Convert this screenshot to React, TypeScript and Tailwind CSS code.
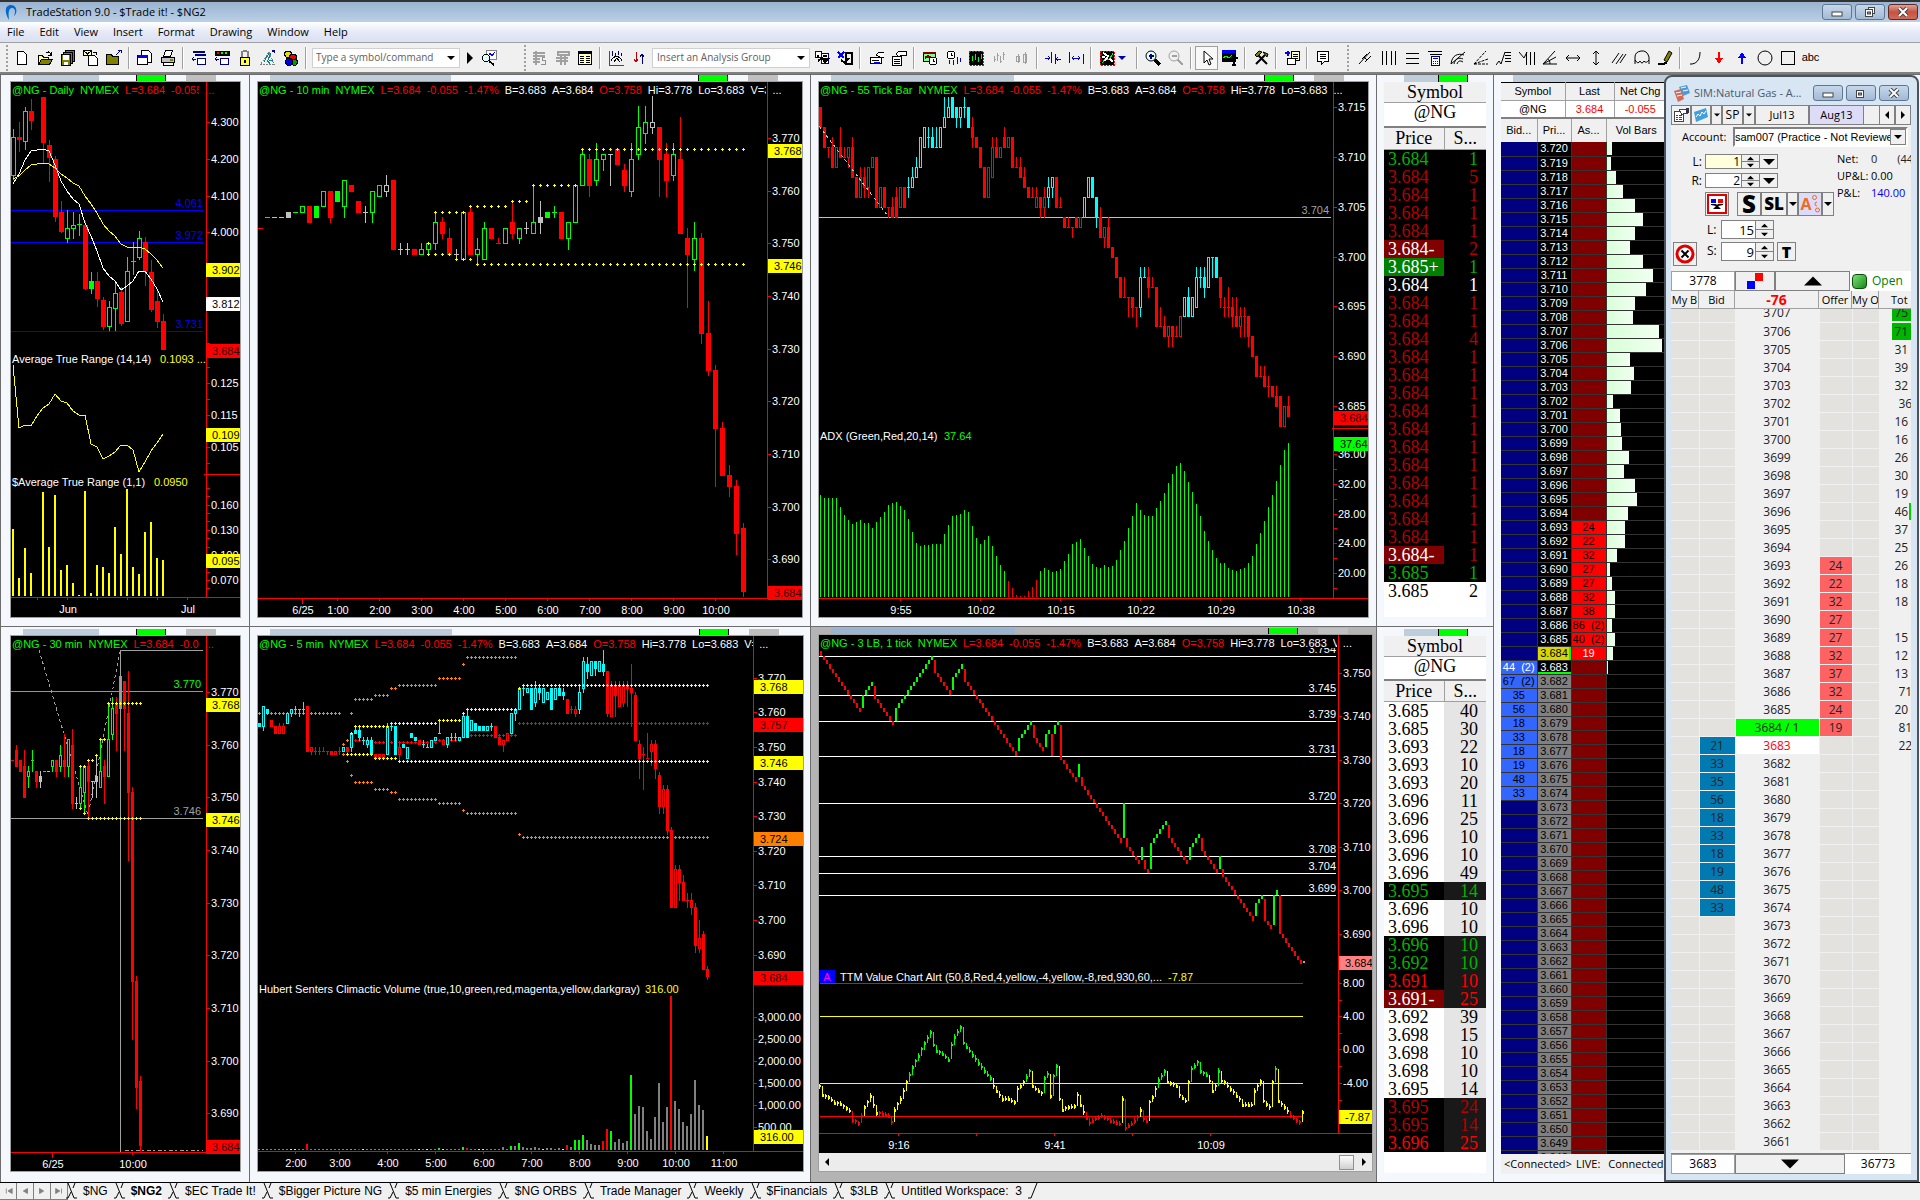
import React from "react";

type Piece = { text: string; color: string; clip?: string };

const GREEN = "#00ff00";
const RED = "#ff0000";
const YELLOW = "#ffff00";
const CYAN = "#00ffff";
const ORANGE = "#ff8000";

const kindColor: Record<string, string> = {
  g: GREEN,
  r: RED,
  c: CYAN,
  w: "#c0c0c0",
};

// One token per bar: colour letter (upper case = other fill), then
// price | top,bottom | high,price,low | high,top,bottom,low
const dailyBars = `g4280,4260,4155,4145 r4299,4260,4253,4222 g4340,4331,4247,4226 r4364,4331,4305,4282 -
r4369,4369,4246,4188 r4252,4236,4205,4138 r4207,4198,4043,4029 r4085,4054,4002,3999 g4060,4012,3984,3972
g4054,4020,4011,3984 g4049,4022,3993 r4030,4019,3848,3844 G3890,3868,3848,3833 r3890,3868,3820,3798
r3823,3814,3743,3736 g3811,3797,3743,3732 g3868,3835,3794,3732 r3851,3836,3752,3748 g3933,3894,3757,3757
g3974,3922,3885 g4004,3985,3932,3926 r3986,3974,3896,3855 r3925,3892,3790,3784 r3843,3811,3757,3742
r3778,3759,3681,3681`;

const tenMinBars = `g755 w755 w755 W756,755 g756 g757,756 r757,754 G757,755 g760,757 r760,760,755,754 G760,758
g762,762,757,755 r761,760 r758,756 w757,756,754 g760,760,756,754 g761,759 w763,761,760,759 r762,749
w750,749,748 w750,749,748 r749,748 g750,749,748,748 g750,750,749,748 g756,754,750,749 r755,754,752,751
r753,751,748,748 w749,748,747 g756,747 r757,756,748,748 g751,749,748,746 g754,753,747,747 r753,751
r751,750,750 g753,750 r758,754,752,751 g753,753,751,750 w754,753,752 g761,754,752,752 W758,755,754,752
G756,755 g757,756,755 r756,751 g754,754,751,749 g761,754 g768,767,761,761 r767,766,761,759
g769,766,762,761 g767,767,766,764 w767,767,761 r768,765 r765,764,761,760 g769,766,760,759
g776,772,767,766 g776,773,771,769 w778,773,772,771 r772,772,766,759 r769,767,762,759 g769,767,763,762
r774,766,752,752 r753,751,748,738 g754,751,747,745 r752,751,733,731 r739,733,726,725 r727,726,715,704
r716,715,706,706 r708,706,704,702 r705,704,695,691 r697,696,684,683`;

const thirtyMinBars = `r757 r760,759,756,756 r757,755 r759,756,750,750 g756,755,754,752 g759,757,755
r755,755,753,752 W755,754,753,752 g755 w755 g757,757,756,755 r757,757,755,754 g760,758,756,755
r762,757,756,754 g761,761,756,754 r763,760,749,748 w750,749,748 g756,752,749,748 g756,756,751,747
r757,756,753,746 w753,753,750 W758,754,753,750 g761,755,752,752 r757,756,754,749 g768,761,754,754
g769,767,762,761 r769,768,766,759 G773,767 r772,772,767,759 r774,766,751,738 r752,751,715,704
r716,715,695,691 r697,696,684,683`;

const fiveMinBars = `C757,756 c762,762,756,755 C761,760 r758,756 r756,754 R757,756,754,754 R757,756,754,754
c760,757 c761,761,760,759 c762,761,760 c761,761,759 c763,761,760 r762,749 R750,750,749,748 r750,749,748
r750,749,748 r750,749,749 r749,749,748 r749,748 R749,748 r750,749,748 c750,749 r750,750,749,748
c754,754,750,749 C756,755,754,754 C756,755,753,752 c753,752,751 c753,752,751,750 C753,752,748,748 r748,747
R748,747 R748,747 c757,756,748,748 c757,756,755 C756,748 R751,750,748,746 C751,750 c750,747 C754,753
C753,752 r752,751 c752,751,750 c751,750,750 c752,750 c753,752 c758,754,754 R752,751 c753,753,751,750
c754,753,752 c754,753,752 c753,752 c760,759,753,753 C761,759,753,753 c758,755 C757,755 C756,755 C756,755
c756,755 c757,756,755 r756,753 r753,751 R752,752,751,749 R754,752 c760,754 c761,761,760,758 c767,761
c768,767,765 c767,766 C767,761 c769,767,763,762 C768,767,766,764 c767,763 c766,764 C767,761
c767,764 C768,767,765,765 C767,766,765,764 r764,760 r762,761,760 R762,761,760,759 c768,766,761,760
c776,775,767,766 C776,774,772,770 c775,771 C775,775,773,771 c775,772 C778,774,772,771 r772,772,760,759
R769,768,759,759 r769,768,765,759 R769,768,762,762 R769,768,763,762 r769,768,767,762 r774,767,766,756
r766,765,752,752 r752,751,747,741 r750,748,738 r754,747,747 R752,751,749,745 r752,751,744,741
r743,742,733,731 R739,738,733,731 r739,738,726,725 r727,726,704,704 R716,715,704,704 r716,715,711,706
r713,711,706,706 r708,706,704 r708,706,704,702 r705,704,693,691 R700,695,692,691 r697,696,686,686
r687,686,684,683`;

const tickBars = `r715,713 r713,711 r711,711,710 r712,711,709,709 R711,709 r713,711,710,710 r711,710,710
R711,711,710,709 r712,711,708,708 r708,706 R709,708,706,706 r709,708,707,706 R709,709,707,706 R710,709
r710,705 R707,705 r707,705 r705,705,704 r706,705,704,704 r707,706,704,704 R707,705 r707,705 c708,707,706
c709,708,707,707 c710,709,708,708 c712,709 c713,711 c713,712,711 C713,712,711,711 c713,711,711 c713,711
c716,714,713,713 c716,715,714,714 C716,714 C715,715,714,713 c715,715,714,713 c716,715,714 C715,713
r714,713,712,711 r712,711 r711,709 r709,706 R709,706 R712,711,708,708 r712,711,710,710 R711,710
r713,712,711,711 R712,711 r712,709 r710,709,709 r710,709,708,708 r709,708,707,707 r707,706 r707,706,706
R707,706,705,705 r706,706,705,704 R707,706,705,704 c708,707,706,705 c708,708,707,706 r708,705 r706,705,705
r704,703 r704,703,703 r703,703,702 r704,703 R704,703 c706,704 c708,706 C708,706 C706,706,704,703
r705,704,702,702 R703,703,702,701 r704,703,701,701 r701,700 r700,698 r698,696 r698,696,696 r696,696,694
r696,696,695,694 r695,695,693 c699,698,695,694 c699,698,698 r699,698,697,696 r698,697,697 r697,693
r695,693,693 r694,693,692,692 R693,693,692,691 r693,693,692,691 r693,692,692 R694,692 c696,694
C697,696,694,694 c696,694 c699,698,695,695 c699,698,697 C699,698,697,696 c700,697 c700,700,698 C700,698
r698,698,696,695 r696,695,694 r697,695,694 r696,695,694,693 r696,694,693,693 R695,694,693,692
r695,694,692 r694,694,692,691 r692,690 r690,688 r689,688,688 r689,688,687,687 r688,687,686 r687,686
r687,686,685,685 r686,683 R685,683 r686,685,684,684`;

type Bar = { kind: string; high: number; top: number; bottom: number; low: number } | null;

function parseBars(src: string): Bar[] {
  return src
    .trim()
    .split(/\s+/)
    .map((t) => {
      if (t === "-") return null;
      const n = t.slice(1).split(",").map(Number);
      const kind = t[0];
      if (n.length === 1) return { kind, high: n[0], top: n[0], bottom: n[0], low: n[0] };
      if (n.length === 2) return { kind, high: n[0], top: n[0], bottom: n[1], low: n[1] };
      if (n.length === 3) return { kind, high: n[0], top: n[1], bottom: n[1], low: n[2] };
      return { kind, high: n[0], top: n[1], bottom: n[2], low: n[3] };
    });
}

type Scale = (p: number) => number;
const scale =
  (refPrice: number, refY: number, perTick: number): Scale =>
  (p) =>
    Math.round(refY + (refPrice - p) * perTick);

function Candles({ src, x0, step, width, y }: { src: string; x0: number; step: number; width: number; y: Scale }) {
  const half = (width - 1) / 2;
  return (
    <g>
      {parseBars(src).map((b, i) => {
        if (!b) return null;
        const cx = x0 + i * step;
        const color = kindColor[b.kind.toLowerCase()];
        const upper = b.kind === b.kind.toUpperCase();
        const filled = b.kind.toLowerCase() === "r" ? !upper : upper;
        const top = y(b.top);
        const h = y(b.bottom) - top;
        return (
          <g key={i}>
            <rect x={cx} y={y(b.high)} width={1} height={y(b.low) - y(b.high) + 1} fill={color} />
            {h < 1 ? (
              <rect x={cx - half} y={top} width={width} height={1} fill={color} />
            ) : filled ? (
              <rect x={cx - half} y={top} width={width} height={h + 1} fill={color} />
            ) : (
              <rect x={cx - half + 0.5} y={top + 0.5} width={width - 1} height={h} fill="#000" stroke={color} />
            )}
          </g>
        );
      })}
    </g>
  );
}

function Dots({ runs, color, x0, step, y }: { runs: number[][]; color: string; x0: number; step: number; y: Scale }) {
  const d = runs
    .map(([from, to, price]) => {
      let s = "";
      for (let i = from; i <= to; i++) {
        const x = x0 + i * step;
        const py = y(price);
        s += `M${x - 1} ${py}h3v1h-3zM${x} ${py - 1}h1v3h-1z`;
      }
      return s;
    })
    .join("");
  return <path d={d} fill={color} />;
}

function Histogram({ heights, x0, step, width, base, color }: { heights: number[]; x0: number; step: number; width: number; base: number; color: (i: number) => string }) {
  return (
    <g>
      {heights.map((h, i) => (
        <rect key={i} x={x0 + i * step} y={base - h} width={width} height={h} fill={color(i)} />
      ))}
    </g>
  );
}

function Label({ x, y, fill = "#fff", anchor = "start", children }: { x: number; y: number; fill?: string; anchor?: "start" | "middle" | "end"; children: React.ReactNode }) {
  return (
    <text x={x} y={y + 4} fill={fill} textAnchor={anchor} fontSize={11} style={{ whiteSpace: "pre" }}>
      {children}
    </text>
  );
}

// [value, y] pairs down the right-hand price axis
function PriceAxis({ x, ticks }: { x: number; ticks: [string, number][] }) {
  return (
    <g>
      {ticks.map(([t, y]) => (
        <g key={t}>
          <rect x={x} y={Math.round(y)} width={4} height={1} fill={RED} />
          <Label x={x + 5} y={y}>
            {t}
          </Label>
        </g>
      ))}
    </g>
  );
}

function Tag({ x, y, width, bg, children }: { x: number; y: number; width: number; bg: string; children: React.ReactNode }) {
  return (
    <g>
      <rect x={x} y={y - 7} width={width} height={14} fill={bg} />
      <Label x={x + 6} y={y} fill={bg === RED ? "#300000" : "#000"}>
        {children}
      </Label>
    </g>
  );
}

function TimeAxis({ y, x1, x2, ticks }: { y: number; x1: number; x2: number; ticks: [string, number][] }) {
  return (
    <g>
      <rect x={x1} y={y} width={x2 - x1} height={1} fill={RED} />
      {ticks.map(([t, x]) => (
        <g key={t + x}>
          <rect x={x} y={y} width={1} height={t.includes("/") ? 6 : 3} fill={RED} />
          <Label x={x + 1} y={y + 12} anchor="middle">
            {t}
          </Label>
        </g>
      ))}
    </g>
  );
}

function linePoints(ys: number[], x0: number, step: number) {
  return ys.map((v, i) => `${x0 + i * step},${v}`).join(" ");
}

const maWhite = [184, 174, 160, 151, 150, 149, 151, 165, 181, 191, 199, 204, 223, 236, 251, 268, 276, 281, 290, 286, 281, 271, 271, 279, 289, 302];
const maYellow = [179, 176, 170, 165, 164, 163, 164, 168, 174, 178, 183, 186, 196, 204, 213, 224, 231, 236, 244, 247, 248, 247, 249, 254, 260, 268];
const atrLine = [365, 428, 425, 426, 416, 408, 404, 394, 401, 403, 411, 415, 415, 444, 447, 459, 456, 452, 445, 445, 450, 472, 462, 451, 443, 434];
const atrBars = [67, 18, 48, 23, 0, 104, 49, 101, 26, 31, 13, 1, 105, 3, 31, 29, 23, 69, 42, 107, 29, 22, 64, 74, 38, 36];

function DailyChart() {
  const y = scale(4300, 122, 0.367);
  return (
    <>
      <rect x={206} y={82} width={1} height={516} fill={RED} />
      {([[4061, "4.061"], [3972, "3.972"], [3731, "3.731"]] as [number, string][]).map(([p, t]) => (
        <g key={t}>
          <rect x={11} y={y(p)} width={192} height={1} fill="#0000ff" />
          <Label x={203} y={y(p) - 7} fill="#0000ff" anchor="end">
            {t}
          </Label>
        </g>
      ))}
      <Candles src={dailyBars} x0={13} step={6} width={5} y={y} />
      <polyline points={linePoints(maWhite, 13, 6)} fill="none" stroke="#fff" />
      <polyline points={linePoints(maYellow, 13, 6)} fill="none" stroke={YELLOW} />
      <PriceAxis x={206} ticks={[["4.300", 122], ["4.200", 159], ["4.100", 196], ["4.000", 232], ["0.125", 383], ["0.115", 415], ["0.105", 447], ["0.160", 505], ["0.130", 530], ["0.100", 555], ["0.070", 580]]} />
      <path d="M206 343h4M206 367h4M206 399h4M206 463h4M206 488h4M206 496h4M206 513h4M206 521h4M206 538h4M206 547h4M206 572h4M206 588h4" stroke={RED} />
      <rect x={204} y={474} width={36} height={1} fill={RED} />
      <Tag x={206} y={270} width={34} bg={YELLOW}>3.902</Tag>
      <Tag x={206} y={304} width={34} bg="#ffffff">3.812</Tag>
      <Tag x={206} y={351} width={34} bg={RED}>3.684</Tag>
      <Tag x={206} y={435} width={34} bg={YELLOW}>0.109</Tag>
      <Tag x={206} y={561} width={34} bg={YELLOW}>0.095</Tag>
      <Label x={12} y={359}>Average True Range (14,14)</Label>
      <Label x={160} y={359} fill={YELLOW}>0.1093 ...</Label>
      <polyline points={linePoints(atrLine, 13, 6)} fill="none" stroke={YELLOW} />
      <Label x={12} y={482}>$Average True Range (1,1)</Label>
      <Label x={154} y={482} fill={YELLOW}>0.0950</Label>
      <Histogram heights={atrBars} x0={12} step={6} width={2} base={596} color={() => YELLOW} />
      <TimeAxis y={597} x1={11} x2={240} ticks={[["Jun", 67], ["Jul", 187], ["", 37], ["", 97], ["", 127], ["", 157]]} />
    </>
  );
}

function TenMinChart() {
  const y = scale(770, 138, 5.268);
  const dots = { x0: 267, step: 7, y, color: YELLOW };
  return (
    <>
      <rect x={767} y={82} width={1} height={516} fill={RED} />
      <rect x={258} y={228} width={5} height={1} fill={RED} />
      <Candles src={tenMinBars} x0={267} step={7} width={5} y={y} />
      <Dots {...dots} runs={[[23, 23, 750], [24, 28, 756], [29, 34, 757], [35, 37, 758], [38, 44, 761], [45, 68, 768]]} />
      <Dots {...dots} runs={[[23, 26, 748], [27, 29, 747], [30, 68, 746]]} />
      <PriceAxis x={767} ticks={[["3.770", 138], ["3.760", 191], ["3.750", 243], ["3.740", 296], ["3.730", 349], ["3.720", 401], ["3.710", 454], ["3.700", 507], ["3.690", 559]]} />
      <Tag x={768} y={151} width={34} bg={YELLOW}>3.768</Tag>
      <Tag x={768} y={266} width={34} bg={YELLOW}>3.746</Tag>
      <Tag x={768} y={593} width={34} bg={RED}>3.684</Tag>
      <TimeAxis y={598} x1={258} x2={768} ticks={[["6/25", 302], ["1:00", 337], ["2:00", 379], ["3:00", 421], ["4:00", 463], ["5:00", 505], ["6:00", 547], ["7:00", 589], ["8:00", 631], ["9:00", 673], ["10:00", 715]]} />
    </>
  );
}

const adx = [
  102, 99, 99, 99, 99, 90, 82, 77, 73, 75, 77, 74, 74, 69, 75, 80, 85, 92, 94, 95, 91, 87, 78, 65, 54, 51, 52, 52, 53, 53,
  53, 63, 72, 81, 82, 83, 87, 85, 71, 59, 53, 57, 61, 51, 41, 32, 26, 16, 9, 2, 1, 1, 6, 10, 17, 26, 29, 27, 25, 26,
  28, 36, 43, 53, 55, 58, 49, 41, 33, 30, 29, 32, 30, 31, 37, 47, 56, 69, 81, 94, 87, 82, 81, 81, 89, 96, 104, 114, 123, 131,
  134, 126, 115, 105, 93, 81, 66, 56, 47, 39, 34, 34, 29, 27, 26, 28, 29, 34, 41, 53, 64, 76, 90, 102, 116, 132, 147, 154,
];

function TickChart() {
  const y = scale(715, 107, 9.976);
  return (
    <>
      <rect x={1333} y={82} width={1} height={516} fill={RED} />
      <rect x={1332} y={428} width={36} height={1} fill={RED} />
      <rect x={819} y={217} width={512} height={1} fill="#c0c0c0" />
      <Label x={1329} y={210} fill="#a0a0a0" anchor="end">3.704</Label>
      <Candles src={tickBars} x0={820} step={4} width={3} y={y} />
      <path d="M819 126L888 216" stroke="#c0c0c0" strokeDasharray="3 3" />
      <PriceAxis x={1333} ticks={[["3.715", 107], ["3.710", 157], ["3.705", 207], ["3.700", 257], ["3.695", 306], ["3.690", 356], ["3.685", 406], ["36.00", 454], ["32.00", 484], ["28.00", 514], ["24.00", 543], ["20.00", 573]]} />
      <path d="M1333 469.5h4M1333 499.5h4M1333 528.5h4M1333 558.5h4M1333 588.5h4" stroke={RED} />
      <Tag x={1334} y={418} width={34} bg={RED}>3.684</Tag>
      <Tag x={1334} y={444} width={34} bg={GREEN}>37.64</Tag>
      <Label x={820} y={436}>ADX (Green,Red,20,14)</Label>
      <Label x={944} y={436} fill={GREEN}>37.64</Label>
      <Histogram heights={adx} x0={820} step={4} width={1} base={597} color={(i) => (i > 46 && i < 55 ? RED : GREEN)} />
      <TimeAxis y={598} x1={819} x2={1368} ticks={[["9:55", 900], ["10:02", 980], ["10:15", 1060], ["10:22", 1140], ["10:29", 1220], ["10:38", 1300]]} />
    </>
  );
}

function ThirtyMinChart() {
  const y = scale(770, 692, 5.263);
  const dots = { x0: 12, step: 4, y, color: YELLOW };
  return (
    <>
      <rect x={206} y={636} width={1} height={517} fill={RED} />
      <rect x={11} y={691} width={192} height={1} fill={GREEN} />
      <Label x={201} y={684} fill={GREEN} anchor="end">3.770</Label>
      <rect x={11} y={818} width={192} height={1} fill="#a0a0a0" />
      <Label x={201} y={811} fill="#a0a0a0" anchor="end">3.746</Label>
      <path d="M39 650L88 815L120 652" fill="none" stroke="#a0a0a0" strokeDasharray="3 3" />
      <Candles src={thirtyMinBars} x0={12} step={4} width={3} y={y} />
      <path d="M120.500 1152V650.500H203" fill="none" stroke="#a0a0a0" />
      <path d="M125 1150.500H203" stroke="#a0a0a0" strokeDasharray="4 2 2 3" />
      <Dots {...dots} runs={[[17, 18, 756], [19, 20, 757], [21, 21, 758], [22, 23, 761], [24, 32, 768]]} />
      <Dots {...dots} runs={[[17, 17, 748], [18, 18, 747], [19, 32, 746]]} />
      <PriceAxis x={206} ticks={[["3.770", 692], ["3.760", 745], ["3.750", 797], ["3.740", 850], ["3.730", 903], ["3.720", 955], ["3.710", 1008], ["3.700", 1061], ["3.690", 1113]]} />
      <Tag x={206} y={705} width={34} bg={YELLOW}>3.768</Tag>
      <Tag x={206} y={820} width={34} bg={YELLOW}>3.746</Tag>
      <Tag x={206} y={1147} width={34} bg={RED}>3.684</Tag>
      <TimeAxis y={1152} x1={11} x2={206} ticks={[["6/25", 52], ["10:00", 132]]} />
    </>
  );
}

const volume = Array.from({ length: 113 }, () => 1);
[4, 4, 7, 3, 2, 2, 3, 2, 1, 2, 2, 1, 2, 1, 5, 3, 10, 10, 15, 10, 6, 5, 5, 9, 21, 19, 8, 11, 7, 9, 75, 36, 44, 43, 19, 11, 33, 67, 28, 43, 154, 49, 41, 28, 24, 36, 70, 45, 40, 14].forEach((v, i) => {
  volume[63 + i] = v;
});
volume[12] = 6;
volume[45] = 2;
volume[51] = 3;
volume[52] = 2;
volume[61] = 3;

const volumeColors: Record<string, number[]> = {
  [GREEN]: [1, 23, 32, 45, 51, 63, 65, 79, 80, 81, 88, 93],
  [RED]: [12, 25, 52, 77, 86, 87, 103],
  [YELLOW]: [8, 9, 26, 40, 42, 46, 55, 56, 71, 76, 112],
  "#ff00ff": [34],
};

function volumeColor(i: number) {
  return Object.keys(volumeColors).find((c) => volumeColors[c].includes(i)) ?? "#808080";
}

function FiveMinChart() {
  const y = scale(770, 678, 3.464);
  const at = { x0: 259, step: 4, y };
  return (
    <>
      <rect x={753} y={636} width={1} height={516} fill={RED} />
      <Dots {...at} color={ORANGE} runs={[[0, 20, 760], [21, 21, 751], [22, 22, 752], [23, 23, 760], [24, 28, 764], [29, 32, 765], [33, 34, 767], [35, 44, 768], [45, 50, 770], [51, 51, 774], [52, 64, 776]]} />
      <Dots {...at} color={ORANGE} runs={[[21, 21, 748], [22, 22, 746], [23, 23, 742], [24, 28, 740], [29, 32, 738], [33, 34, 737], [35, 44, 735], [45, 50, 734], [51, 51, 732], [52, 64, 731], [65, 65, 725], [66, 112, 724]]} />
      <Dots {...at} color={RED} runs={[[24, 28, 752], [29, 34, 751.500], [35, 44, 751.500], [45, 50, 752], [51, 64, 753.500], [65, 112, 757]]} />
      <Candles src={fiveMinBars} x0={259} step={4} width={3} y={y} />
      <Dots {...at} color={YELLOW} runs={[[23, 23, 754], [24, 32, 756], [33, 44, 757], [45, 50, 758], [51, 51, 760], [52, 64, 761], [65, 65, 767], [66, 112, 768]]} />
      <Dots {...at} color={YELLOW} runs={[[22, 28, 748], [29, 34, 747], [35, 112, 746]]} />
      <PriceAxis x={753} ticks={[["3.770", 678], ["3.760", 712], ["3.750", 747], ["3.740", 782], ["3.730", 816], ["3.720", 851], ["3.710", 885], ["3.700", 920], ["3.690", 955], ["3,000.00", 1017], ["2,500.00", 1039], ["2,000.00", 1061], ["1,500.00", 1083], ["1,000.00", 1105], ["500.00", 1127]]} />
      <Tag x={754} y={687} width={49} bg={YELLOW}>3.768</Tag>
      <Tag x={754} y={725} width={49} bg={RED}>3.757</Tag>
      <Tag x={754} y={763} width={49} bg={YELLOW}>3.746</Tag>
      <Tag x={754} y={839} width={49} bg={ORANGE}>3.724</Tag>
      <Tag x={754} y={978} width={49} bg={RED}>3.684</Tag>
      <Tag x={754} y={1137} width={49} bg={YELLOW}>316.00</Tag>
      <Label x={259} y={989}>Hubert Senters Climactic Volume (true,10,green,red,magenta,yellow,darkgray)</Label>
      <Label x={645} y={989} fill={YELLOW}>316.00</Label>
      <Histogram heights={volume} x0={258} step={4} width={2} base={1150} color={volumeColor} />
      <TimeAxis y={1151} x1={258} x2={803} ticks={[["2:00", 295], ["3:00", 339], ["4:00", 387], ["5:00", 435], ["6:00", 483], ["7:00", 531], ["8:00", 579], ["9:00", 627], ["10:00", 675], ["11:00", 723]]} />
    </>
  );
}

// each leg: first bar start, first bar end, last close
const legs: [number, number, number][] = [
  [755, 754, 741], [742, 745, 748], [747, 744, 738], [739, 742, 754], [753, 750, 745], [746, 749, 752], [751, 748, 731],
  [732, 735, 739], [738, 735, 732], [733, 736, 737], [736, 731, 731], [736, 738, 739], [738, 730, 725], [726, 729, 729],
  [726, 724, 711], [712, 720, 720], [712, 710, 706], [707, 710, 710], [707, 705, 704], [705, 711, 716], [715, 712, 706],
  [707, 710, 713], [712, 709, 704], [705, 708, 708], [705, 703, 693], [694, 697, 699], [698, 693, 691], [692, 699, 700],
  [699, 690, 683],
];

const ttm: [number, number][] = [
  [0, -4.5], [1, -5.5], [3, -5.8], [5, -6.5], [7, -6.6], [10, -7.4], [11, -8.5], [13, -8.9], [14, -8], [15, -7], [16, -6.4], [17, -5.6], [18, -6.7],
  [19, -7.7], [21, -7.8], [23, -8], [24, -8.8], [25, -7.3], [27, -6], [29, -4], [31, -2.2], [33, -0.8], [35, 0.7], [37, 2], [38, 0.5], [39, -0.2],
  [41, -0.6], [43, -1.3], [44, 0.5], [45, 1.5], [47, 2.6], [48, 0.7], [50, -0.2], [53, -1.7], [55, -2.7], [57, -3.5], [58, -4.5], [60, -5.5],
  [61, -6], [63, -6], [65, -6.4], [66, -4.8], [68, -4], [70, -2.7], [71, -4.5], [74, -5.3], [75, -3.5], [76, -3], [77, -5.7], [78, -3.3], [79, -2.1],
  [80, -6], [81, -7.3], [83, -7], [85, -6.9], [86, -5.5], [87, -6.7], [88, -7.6], [90, -8.9], [92, -8.4], [94, -8], [97, -8.6], [100, -9], [101, -6],
  [102, -9.5], [104, -9], [106, -8.2], [107, -7.3], [108, -8.4], [109, -8.6], [110, -6.4], [111, -5.8], [113, -3.7], [115, -2.7], [116, -4],
  [119, -4.4], [120, -5.5], [122, -6.2], [123, -4], [124, -2.4], [126, -1.6], [127, -2.7], [129, -3.1], [130, -3.9], [131, -5], [132, -4.5],
  [133, -2.6], [134, -3.9], [135, -4], [138, -5.2], [140, -6], [141, -6.7], [144, -6.7], [145, -5], [147, -3.9], [148, -6.2], [150, -7],
  [151, -4], [152, -2.4], [153, -6.2], [155, -7], [157, -8], [160, -8.8], [161, -7.6],
];

function valueAt(i: number) {
  const k = ttm.findIndex(([x]) => x >= i);
  if (k <= 0) return ttm[0][1];
  const [x1, v1] = ttm[k - 1];
  const [x2, v2] = ttm[k];
  return v1 + ((v2 - v1) * (i - x1)) / (x2 - x1);
}

function LineBreakChart() {
  const y = scale(750, 673, 4.347);
  const ty = (v: number) => 1049 - v * 8.32;
  const bars: { from: number; to: number; up: boolean }[] = [];
  legs.forEach(([a, b, end]) => {
    const dir = b > a ? 1 : -1;
    bars.push({ from: a, to: b, up: dir > 0 });
    for (let c = b; c !== end; c += dir) bars.push({ from: c, to: c + dir, up: dir > 0 });
  });
  return (
    <>
      <rect x={1338} y={635} width={1} height={499} fill={RED} />
      {[754, 745, 739, 731, 720, 708, 704, 699].map((p) => (
        <g key={p}>
          <rect x={819} y={y(p)} width={517} height={1} fill="#fff" />
          <Label x={1336} y={y(p) - 7} anchor="end">{`3.${p}`}</Label>
        </g>
      ))}
      <rect x={1300} y={635} width={38} height={13} fill="#000" />
      {bars.map((b, i) => (
        <rect key={i} x={820 + i * 3} y={y(Math.max(b.from, b.to))} width={2} height={y(Math.min(b.from, b.to)) - y(Math.max(b.from, b.to))} fill={b.up ? GREEN : RED} />
      ))}
      <rect x={1303} y={961} width={2} height={2} fill="#ff8080" />
      <PriceAxis x={1338} ticks={[["3.750", 673], ["3.740", 716], ["3.730", 760], ["3.720", 803], ["3.710", 847], ["3.700", 890], ["3.690", 934], ["8.00", 983], ["4.00", 1016], ["0.00", 1049], ["-4.00", 1083]]} />
      <path d="M1338 1000.500h4M1338 1033.500h4M1338 1066.500h4M1338 1100.500h4" stroke={RED} />
      <Tag x={1339} y={963} width={33} bg="#ff8080">3.684</Tag>
      <Tag x={1339} y={1117} width={33} bg={YELLOW}>-7.87</Tag>
      <rect x={819} y={970} width={16} height={13} fill="#0000ff" />
      <Label x={827} y={977} fill="#ff00ff" anchor="middle">A</Label>
      <Label x={840} y={977}>TTM Value Chart Alrt (50,8,Red,4,yellow,-4,yellow,-8,red,930,60,...</Label>
      <Label x={1168} y={977} fill={YELLOW}>-7.87</Label>
      <rect x={820} y={983} width={483} height={1} fill={RED} />
      <rect x={820} y={1016} width={483} height={1} fill={YELLOW} />
      <rect x={820} y={1083} width={483} height={1} fill={YELLOW} />
      <rect x={820} y={1116} width={483} height={1} fill={RED} />
      {bars.concat(bars[0]).map((_, i) => {
        const v = valueAt(i);
        const prev = valueAt(Math.max(0, i - 1));
        const hi = Math.max(v + 0.3, prev);
        const lo = Math.min(v - 0.3, prev);
        const color = v > -3.8 ? GREEN : v < -7.7 ? RED : YELLOW;
        return (
          <g key={i} fill={color}>
            <rect x={819 + i * 3} y={Math.round(ty(hi))} width={1} height={Math.round(ty(lo) - ty(hi))} />
            <rect x={820 + i * 3} y={Math.round(ty(v)) - 1} width={1} height={i % 2 ? 3 : 2} />
          </g>
        );
      })}
      <TimeAxis y={1133} x1={819} x2={1372} ticks={[["9:16", 898], ["9:41", 1054], ["10:09", 1210], ["", 976], ["", 1132]]} />
    </>
  );
}

function quote(name: string, tail: Piece[]): Piece[] {
  return [{ text: name, color: "text-[#00ff00]" }, { text: "NYMEX", color: "text-[#00ff00]" }, { text: "L=3.684", color: "text-[#ff0000]" }, ...tail];
}

const fullTail: Piece[] = [
  { text: "-0.055", color: "text-[#ff0000]" },
  { text: "-1.47%", color: "text-[#ff0000]" },
  { text: "B=3.683", color: "text-white" },
  { text: "A=3.684", color: "text-white" },
  { text: "O=3.758", color: "text-[#ff0000]" },
  { text: "Hi=3.778", color: "text-white" },
  { text: "Lo=3.683", color: "text-white" },
];

function TitleStrip({ active = false, short = false }: { active?: boolean; short?: boolean }) {
  return (
    <div className="flex h-[7px] shrink-0 justify-between">
      <span className={`w-1/3 ${short ? "ml-5" : "ml-3"} ${active ? "bg-[#99b4d1]" : "bg-[#bfcddb]"}`} />
      {short ? (
        <span className="mr-auto w-[30px] border-x border-black bg-[#00ff00]" />
      ) : (
        <span className="mr-6 flex gap-5">
          <span className="w-[30px] border-x border-black bg-[#00ff00]" />
          <span className="w-[30px] bg-[#c0c0c0]" />
        </span>
      )}
    </div>
  );
}

function ChartWindow({ header, viewBox, title, active, pad, children, footer }: { header: Piece[]; viewBox: string; title: string; active?: boolean; pad: string; children: React.ReactNode; footer?: React.ReactNode }) {
  return (
    <section aria-label={title} className={`flex min-h-0 min-w-0 flex-col border-l border-t border-[#6d6d6d] ${pad} ${active ? "bg-[#b4b4b4]" : "bg-[#f4f7fc]"}`}>
      <TitleStrip active={active} />
      <div className="relative flex min-h-0 flex-1 flex-col bg-black outline outline-[#a0a0a0]">
        <div className="absolute left-px top-0 flex h-4 items-center gap-[6px] whitespace-nowrap text-[11px] leading-4">
          {header.map((p) => (
            <span key={p.text} className={`${p.color} ${p.clip ?? ""}`}>
              {p.text}
            </span>
          ))}
        </div>
        <svg viewBox={viewBox} className="min-h-0 w-full flex-1" shapeRendering="crispEdges" role="img" aria-label={title}>
          {children}
        </svg>
        {footer}
      </div>
    </section>
  );
}

type Trade = [string, string, string, string];

const G = "text-[#00b400]";
const D = "text-[#b40000]";
const row = (price: string, size: string, tone: string, bg = "bg-black"): Trade => [price, size, tone, bg];

const topTrades: Trade[] = [
  row("3.684", "1", G), row("3.684", "5", D), row("3.684", "1", D), row("3.684", "1", D), row("3.684", "1", D),
  row("3.684-", "2", D, "minus"), row("3.685+", "1", G, "plus"), row("3.684", "1", "text-white"), row("3.684", "1", D), row("3.684", "1", D),
  row("3.684", "4", D), row("3.684", "1", D), row("3.684", "1", D), row("3.684", "1", D), row("3.684", "1", D), row("3.684", "1", D),
  row("3.684", "1", D), row("3.684", "1", D), row("3.684", "1", D), row("3.684", "1", D), row("3.684", "1", D), row("3.684", "1", D),
  row("3.684-", "1", D, "minus"), row("3.685", "1", G), row("3.685", "2", "text-black", "bg-white"),
];

const B = "text-black";
const R = "text-[#ff0000]";
const bottomTrades: Trade[] = [
  row("3.685", "40", B, "bg-white"), row("3.685", "30", B, "bg-white"), row("3.693", "22", B, "bg-white"), row("3.693", "10", B, "bg-white"),
  row("3.693", "20", B, "bg-white"), row("3.696", "11", B, "bg-white"), row("3.696", "25", B, "bg-white"), row("3.696", "10", B, "bg-white"),
  row("3.696", "10", B, "bg-white"), row("3.696", "49", B, "bg-white"), row("3.695", "14", G), row("3.696", "10", B, "bg-white"),
  row("3.696", "10", B, "bg-white"), row("3.696", "10", G), row("3.692", "10", G), row("3.691", "10", R), row("3.691-", "25", R, "minus"),
  row("3.692", "39", B, "bg-white"), row("3.698", "15", B, "bg-white"), row("3.698", "10", B, "bg-white"), row("3.698", "10", B, "bg-white"),
  row("3.695", "14", B, "bg-white"), row("3.695", "24", D), row("3.695", "14", D), row("3.696", "25", R),
];

function TimeAndSales({ trades, shaded }: { trades: Trade[]; shaded?: boolean }) {
  return (
    <section aria-label="Time and sales" className={`flex min-h-0 min-w-0 flex-col border-l border-t border-[#6d6d6d] bg-[#f4f7fc] pb-[9px] pl-[7px] pr-[7px] ${shaded ? "pt-[2px]" : ""}`}>
      <TitleStrip short />
      <div className="flex min-h-0 flex-1 flex-col overflow-hidden bg-white font-['Liberation_Serif',serif] text-[18px] leading-[18px]">
        <table className="w-full border-collapse text-center">
          <thead>
            <tr className="h-5 border-b border-[#a0a0a0] bg-[#f0f0f0]">
              <th className="p-0 font-normal">Symbol</th>
            </tr>
          </thead>
          <tbody>
            <tr className="h-[18px]">
              <td className="p-0">@NG</td>
            </tr>
          </tbody>
        </table>
        <table className={`w-full table-fixed border-collapse border-t-2 border-[#808080] ${shaded ? "mt-1" : "mt-[5px]"}`}>
          <thead>
            <tr className={`border-b border-[#a0a0a0] bg-[#f0f0f0] ${shaded ? "h-[22px]" : "h-[23px]"}`}>
              <th className="w-[60px] border-r border-[#a0a0a0] p-0 font-normal">Price</th>
              <th className="p-0 font-normal">S...</th>
            </tr>
          </thead>
          <tbody>
            {trades.map(([price, size, tone, bg], i) => {
              const priceCls = bg === "minus" ? "bg-[#800000] text-white" : bg === "plus" ? "bg-[#008000] text-white" : `${bg} ${tone}`;
              const sizeBg = bg === "bg-white" ? (shaded ? "bg-[#e5e5e5]" : "bg-white") : shaded ? "bg-[#191919]" : "bg-black";
              return (
                <tr key={i} className="h-[18px]">
                  <td className={`p-0 pl-1 ${priceCls}`}>{price}</td>
                  <td className={`p-0 pr-2 text-right ${sizeBg} ${tone}`}>{size}</td>
                </tr>
              );
            })}
          </tbody>
        </table>
      </div>
    </section>
  );
}

const volBars = [5, 4, 9, 16, 28, 36, 28, 23, 36, 46, 39, 28, 26, 52, 55, 23, 27, 24, 6, 13, 14, 15, 22, 17, 28, 30, 21, 18, 18, 10, 3, 5, 8, 8, 5, 8, 6, 1];
const askSizes: Record<number, string> = { 693: "24", 692: "22", 691: "32", 690: "27", 689: "27", 688: "32", 687: "38", 686: "86  (2)", 685: "40  (2)", 684: "19" };
const bidSizes: Record<number, string> = { 683: "44  (2)", 682: "67  (2)", 681: "35", 680: "56", 679: "18", 678: "33", 677: "18", 676: "19", 675: "48", 674: "33" };

function Matrix() {
  const prices = Array.from({ length: 73 }, (_, i) => 720 - i);
  return (
    <section aria-label="Matrix" className="flex min-h-0 min-w-0 flex-col border-l border-t border-[#6d6d6d] bg-[#f4f7fc] pb-2 pl-[7px] text-[11px]">
      <div className="ml-3 h-[7px] w-[240px] shrink-0 bg-[#bfcddb]" />
      <div className="flex min-h-0 w-[165px] flex-1 flex-col overflow-hidden">
        <table className="w-full table-fixed border-collapse border-t border-black bg-white text-center">
          <thead>
            <tr className="h-[17px] border-b border-[#a0a0a0] bg-[#f0f0f0]">
              <th className="w-[64px] border-r border-[#a0a0a0] p-0 font-normal">Symbol</th>
              <th className="w-[49px] border-r border-[#a0a0a0] p-0 font-normal">Last</th>
              <th className="p-0 font-normal">Net Chg</th>
            </tr>
          </thead>
          <tbody>
            <tr className="h-[17px]">
              <td className="border-r border-[#a0a0a0] p-0">@NG</td>
              <td className="border-r border-[#a0a0a0] p-0 text-[#ff0000]">3.684</td>
              <td className="p-0 text-[#ff0000]">-0.055</td>
            </tr>
          </tbody>
        </table>
        <div className="min-h-0 flex-1 overflow-hidden border-t-2 border-[#808080] bg-black">
          <table className="w-full table-fixed border-collapse">
            <thead>
              <tr className="h-[23px] bg-[#f0f0f0]">
                <th className="w-9 border-r border-[#a0a0a0] p-0 font-normal">Bid...</th>
                <th className="w-[34px] border-r border-[#a0a0a0] p-0 font-normal">Pri...</th>
                <th className="w-[35px] border-r border-[#a0a0a0] p-0 font-normal">As...</th>
                <th className="p-0 font-normal">Vol Bars</th>
              </tr>
            </thead>
            <tbody>
              {prices.map((p, i) => (
                <tr key={p} className="h-[14px] leading-[13px]">
                  <td className={`whitespace-pre border-b border-r border-[#333] p-0 text-center ${bidSizes[p] ? "bg-[#3366ff]" : "bg-[#000080]"} ${p === 683 ? "text-white" : "text-black"}`}>{bidSizes[p]}</td>
                  <td
                    className={`border-b border-r border-[#333] p-0 text-center ${
                      p === 684
                        ? "bg-[#d8d800] text-black shadow-[inset_-2px_0_0_#00ff00]"
                        : p === 683
                          ? "bg-black text-white shadow-[inset_0_-2px_0_#00ff00]"
                          : p > 683
                            ? "bg-black text-white"
                            : "bg-[#808080] text-black"
                    }`}
                  >
                    3.{p}
                  </td>
                  <td className={`whitespace-pre border-b border-r border-[#333] p-0 text-center ${askSizes[p] ? "bg-[#ff0000]" : "bg-[#800000]"} ${p === 684 ? "text-white" : "text-black"}`}>{askSizes[p]}</td>
                  <td className="border-b border-[#333] p-0">
                    {volBars[i] ? <div className="h-[13px] bg-gradient-to-r from-[#d8ffd8] to-[#f0fff0]" style={{ width: volBars[i] }} /> : null}
                  </td>
                </tr>
              ))}
            </tbody>
          </table>
        </div>
        <div className="flex h-5 shrink-0 items-center gap-1 whitespace-nowrap bg-[#f0f0f0] pl-[3px] font-['Open_Sans',sans-serif] text-[11px]">
          <span>&lt;Connected&gt;</span>
          <span>LIVE:</span>
          <span className="pl-1">Connected</span>
        </div>
      </div>
    </section>
  );
}

function Tri({ dir = "down", size = 8 }: { dir?: "down" | "up" | "left" | "right"; size?: number }) {
  const d = { down: "M0 2h8L4 6z", up: "M0 6h8L4 2z", left: "M6 0v8L2 4z", right: "M2 0v8l4-4z" }[dir];
  return (
    <svg width={size} height={size} viewBox="0 0 8 8" aria-hidden="true">
      <path d={d} fill="#000" />
    </svg>
  );
}

const toolBtn = "flex items-center justify-center border border-[#808080] bg-[#f0f0f0]";
const toolBtnOn = "flex items-center justify-center border border-[#808080] bg-[#dcdcf8]";

function Spinner({ label, value, tint, wide }: { label: string; value: string; tint?: string; wide?: boolean }) {
  return (
    <>
      <input aria-label={label} defaultValue={value} className={`border border-[#808080] px-px text-right leading-3 outline-none ${wide ? "h-[19px] w-[35px] text-[13px]" : "h-[15px] w-[37px] text-[12px]"} ${tint ?? "bg-white"}`} />
      <span className={`flex w-[18px] flex-col border-y border-r border-[#808080] ${wide ? "h-[19px]" : "h-[15px]"}`}>
        <button aria-label={`${label} up`} className="flex min-h-0 flex-1 items-center justify-center border-b border-[#808080]">
          <Tri dir="up" size={7} />
        </button>
        <button aria-label={`${label} down`} className="flex min-h-0 flex-1 items-center justify-center">
          <Tri size={7} />
        </button>
      </span>
    </>
  );
}

const offers: Record<number, string> = { 3693: "24", 3692: "22", 3691: "32", 3690: "27", 3689: "27", 3688: "32", 3687: "37", 3686: "32", 3685: "24", 3684: "19" };
const bids: Record<number, string> = { 3683: "21", 3682: "33", 3681: "35", 3680: "56", 3679: "18", 3678: "33", 3677: "18", 3676: "19", 3675: "48", 3674: "33" };
const totals = ["75", "71", "31", "39", "32", "36", "16", "16", "26", "30", "19", "46", "37", "25", "26", "18", "18", "", "15", "12", "13", "71", "20", "81", "22"];
const narrowTotals = [3702, 3686, 3684, 3683];

function GlassButton({ label, close, children }: { label: string; close?: boolean; children: React.ReactNode }) {
  return (
    <button
      aria-label={label}
      className={`flex h-4 w-[30px] items-center justify-center rounded-[3px] border ${close ? "border-[#5c2a26] bg-gradient-to-b from-[#dba39a] via-[#c8513f] to-[#cf6b57]" : "border-[#5f7590] bg-gradient-to-b from-[#c6d7ea] to-[#a3bad5]"}`}
    >
      {children}
    </button>
  );
}

function MinGlyph() {
  return (
    <svg width="12" height="10" viewBox="0 0 12 10" aria-hidden="true">
      <rect x="1" y="5" width="10" height="4" fill="#fff" stroke="#444" />
    </svg>
  );
}

function MaxGlyph({ restore }: { restore?: boolean }) {
  return (
    <svg width="12" height="11" viewBox="0 0 12 11" aria-hidden="true">
      {restore && <rect x="4.500" y="0.500" width="6" height="6" fill="#fff" stroke="#444" />}
      <rect x="1.500" y="2.500" width="7" height="7" fill="#fff" stroke="#444" />
      <rect x="3.500" y="5" width="3" height="2" fill="#99b" stroke="#444" />
    </svg>
  );
}

function CloseGlyph() {
  return (
    <svg width="12" height="10" viewBox="0 0 12 10" aria-hidden="true">
      <path d="M2 1l8 8M10 1L2 9" stroke="#444" strokeWidth="4" />
      <path d="M2 1l8 8M10 1L2 9" stroke="#fff" strokeWidth="2" />
    </svg>
  );
}

function DomWindow() {
  const ladder = Array.from({ length: 47 }, (_, i) => 3707 - i);
  return (
    <aside className="absolute bottom-[18px] right-px top-[75px] flex w-[255px] flex-col rounded-t-lg border-2 border-[#4b535d] bg-[#d8e5f3] pb-[6px] pl-[5px] pr-[6px] font-['Open_Sans',sans-serif] text-[12px]">
      <header className="flex h-[28px] shrink-0 items-center gap-1 pl-[2px] pr-[2px] pt-1">
        <svg width="17" height="17" viewBox="0 0 17 17" aria-hidden="true">
          <path d="M6 2l8-2 3 8-7 3z" fill="#4a9ad4" />
          <path d="M1 6l7-2 3 10-6 3z" fill="#d46a5a" />
          <path d="M3 8l5-1M4 11l5-1M8 3l5-1M10 6l5-1" stroke="#fff" />
        </svg>
        <h2 className="flex-1 whitespace-nowrap text-[11px] text-[#4d5a68]">SIM:Natural Gas - A...</h2>
        <div className="flex gap-[3px]">
          <GlassButton label="Minimize order window"><MinGlyph /></GlassButton>
          <GlassButton label="Maximize order window"><MaxGlyph /></GlassButton>
          <GlassButton label="Close order window"><CloseGlyph /></GlassButton>
        </div>
      </header>
      <div className="flex min-h-0 flex-1 flex-col overflow-hidden bg-[#f0f0f0]">
        <div className="flex h-5 shrink-0">
          <button aria-label="Properties" className={`${toolBtn} w-5`}>
            <svg width="16" height="16" viewBox="0 0 16 16" shapeRendering="crispEdges" aria-hidden="true">
              <path d="M1.500 4.500h9v10h-9z" fill="#fff" stroke="#444" />
              <path d="M3 8h2M6 8h3M3 10h2M6 10h3M3 12h2M6 12h3" stroke="#444" />
              <path d="M6 2h8v4h-3l-2 2-1-2z" fill="#fff" stroke="#444" />
              <path d="M13 1h3v5h-3z" fill="#334" />
            </svg>
          </button>
          <button aria-label="Chart" className={`${toolBtn} w-5`}>
            <svg width="16" height="16" viewBox="0 0 16 16" aria-hidden="true">
              <path d="M1 5l12-4 2 9-12 5z" fill="#3f9fe0" />
              <path d="M3 10l2-3 2 2 2-4 2 2 2-3" fill="none" stroke="#fff" />
            </svg>
          </button>
          <button aria-label="Chart menu" className={`${toolBtn} w-[11px]`}><Tri size={6} /></button>
          <button className={`${toolBtn} w-[21px]`}>SP</button>
          <button aria-label="SP menu" className={`${toolBtn} w-[12px]`}><Tri size={6} /></button>
          <button className={`${toolBtn} w-[54px] text-[11px]`}>Jul13</button>
          <button className={`${toolBtnOn} w-[55px] text-[11px]`}>Aug13</button>
          <span className="flex-1 border-y border-[#808080]" />
          <button aria-label="Previous month" className={`${toolBtn} w-4`}><Tri dir="left" /></button>
          <button aria-label="Next month" className={`${toolBtn} w-4`}><Tri dir="right" /></button>
        </div>
        <div className="mt-[2px] flex h-5 shrink-0 items-center pl-[11px] pr-[3px] text-[11px]">
          <label htmlFor="account" className="w-[51px]">Account:</label>
          <span className="relative flex h-full flex-1 border-2 border-[#808080] border-b-white border-r-white bg-white">
            <select id="account" className="w-full appearance-none overflow-hidden bg-white font-['Liberation_Sans',sans-serif] text-[11px] leading-4 outline-none">
              <option>sam007 (Practice - Not Reviewed)</option>
            </select>
            <span className="pointer-events-none absolute right-0 top-0 flex h-full w-4 items-center justify-center border border-[#808080] bg-[#f0f0f0]"><Tri /></span>
          </span>
        </div>
        <div className="mt-[3px] flex shrink-0">
          <div className="w-[164px] shrink-0 pt-1">
            {(["L:1", "R:2"] as const).map((s) => (
              <div key={s} className="mb-1 flex h-[15px] items-center">
                <span className="w-[31px] text-right leading-4">{s.slice(0, 2)}</span>
                <span className="w-[3px]" />
                <Spinner label={s[0] === "L" ? "Left quantity" : "Right quantity"} value={s[2]} tint={s[0] === "L" ? "bg-[#ffffdc]" : undefined} />
                <button aria-label="Quantity presets" className="flex h-[15px] w-[18px] items-center justify-center border-y border-r border-[#808080]"><Tri size={12} /></button>
              </div>
            ))}
            <div className="flex h-6 pl-[34px]">
              <button aria-label="Order mode" className={`${toolBtn} mr-2 w-6`}>
                <svg width="20" height="20" viewBox="0 0 20 20" aria-hidden="true">
                  <rect x="1" y="1" width="18" height="18" fill="#fff" stroke="#e00000" strokeWidth="2" />
                  <rect x="4" y="5" width="5" height="4" fill="#00f" />
                  <rect x="11" y="5" width="5" height="4" fill="#f00" />
                  <path d="M4 10h5l1 1 1-1h5v1l-5 1 3 3H6l3-3-5-1z" fill="#000" />
                </svg>
              </button>
              <button className={`${toolBtn} w-6 text-[24px] font-extrabold leading-5`}>S</button>
              <button className={`${toolBtn} w-[26px] text-[17px] font-extrabold leading-5`}>SL</button>
              <button aria-label="SL menu" className={`${toolBtn} w-[11px]`}><Tri size={8} /></button>
              <button aria-label="OCO" className={`${toolBtnOn} w-6`}>
                <span className="text-[16px] font-bold leading-4 text-[#f06a20]">A</span>
                <svg width="8" height="20" viewBox="0 0 8 20" fill="none" stroke="#f06a20" aria-hidden="true">
                  <circle cx="2.500" cy="3.500" r="2" />
                  <path d="M5 8a2 2 0 1 0 0 4" />
                  <circle cx="5.500" cy="16" r="2" />
                </svg>
              </button>
              <button aria-label="OCO menu" className={`${toolBtn} w-[12px]`}><Tri size={8} /></button>
            </div>
            <div className="mt-1 flex h-[19px] items-center pl-9">
              <span className="w-[14px]">L:</span>
              <Spinner label="Limit offset" value="15" wide />
            </div>
            <div className="mt-[3px] flex h-6 items-start">
              <button aria-label="Cancel all" className={`${toolBtn} ml-[2px] mr-[10px] h-6 w-6`}>
                <svg width="20" height="20" viewBox="0 0 20 20" fill="none" aria-hidden="true">
                  <circle cx="10" cy="10" r="8" fill="#fff" stroke="#e00000" strokeWidth="3" />
                  <path d="M6.500 6.500l7 7M13.500 6.500l-7 7" stroke="#000" strokeWidth="2" />
                </svg>
              </button>
              <span className="w-[14px]">S:</span>
              <Spinner label="Stop offset" value="9" wide />
              <button className={`${toolBtn} ml-[3px] h-[19px] w-[19px] text-[16px] font-extrabold leading-4`}>T</button>
            </div>
          </div>
          <dl className="grid h-[54px] flex-1 grid-cols-[36px_1fr] content-start overflow-hidden whitespace-nowrap text-[11px] leading-[17px]">
            <dt className="pl-[2px]">Net:</dt>
            <dd className="flex gap-5 text-[#222]"><span>0</span><span>(44</span></dd>
            <dt className="pl-[2px]">UP&amp;L:</dt>
            <dd>0.00</dd>
            <dt className="pl-[2px]">P&amp;L:</dt>
            <dd className="text-[#0000ff]">140.00</dd>
          </dl>
        </div>
        <div className="mt-[5px] flex h-5 shrink-0 bg-white">
          <span className="flex w-16 items-center justify-center border border-[#a0a0a0]">3778</span>
          <button aria-label="Toggle sides" className={`${toolBtn} w-10`}>
            <svg width="16" height="16" viewBox="0 0 16 16" aria-hidden="true">
              <rect x="8" y="0" width="8" height="8" fill="#f00" />
              <rect x="0" y="8" width="8" height="8" fill="#00f" />
            </svg>
          </button>
          <button aria-label="Scroll up" className={`${toolBtn} w-[75px]`}><Tri dir="up" size={18} /></button>
          <span className="flex flex-1 items-center gap-[5px] pl-[2px] text-[#008000]">
            <span className="h-[15px] w-[15px] rounded border border-[#065006] bg-gradient-to-br from-[#7be07b] to-[#0a8a0a]" />
            Open
          </span>
        </div>
        <div className="flex min-h-0 flex-1 flex-col overflow-hidden border-b border-[#808080]">
          <div className="flex h-[18px] shrink-0 border-b border-[#a0a0a0] text-center text-[11px] leading-[18px]">
            <span className="w-7 overflow-hidden whitespace-nowrap border-r border-[#a0a0a0]">My B</span>
            <span className="w-9 border-r border-[#a0a0a0]">Bid</span>
            <span className="w-[84px] border-r border-[#a0a0a0] text-[14px] font-bold text-[#f00]">-76</span>
            <span className="w-[33px] border-r border-[#a0a0a0]">Offer</span>
            <span className="w-[27px] overflow-hidden whitespace-nowrap border-r border-[#a0a0a0] text-left">My O</span>
            <span className="flex-1 pl-3 text-left">Tot</span>
          </div>
          <div className="flex min-h-0 flex-1 flex-col overflow-hidden">
            <table className="mt-[-5px] w-full table-fixed border-collapse text-center">
              <tbody>
                {ladder.map((p, i) => (
                  <tr key={p} className="h-[18px] leading-[17px] text-[#222]">
                    <td className="w-7 border-b border-r border-[#f0f0f0] bg-[#e3e2de] p-0" />
                    <td className={`w-9 border-b border-r border-[#f0f0f0] p-0 ${bids[p] ? "bg-[#007ab1]" : "bg-[#e3e2de]"}`}>{bids[p]}</td>
                    <td className={`w-[84px] border-b border-r border-[#f0f0f0] p-0 ${p === 3684 ? "bg-[#00ff00]" : p === 3683 ? "bg-white text-[#ff0000]" : ""}`}>{p === 3684 ? "3684 / 1" : p}</td>
                    <td className={`w-[33px] border-b border-r border-[#f0f0f0] p-0 ${offers[p] ? "bg-[#ff6262]" : "bg-[#e3e2de]"}`}>{offers[p]}</td>
                    <td className="w-[27px] border-b border-r border-[#f0f0f0] bg-[#e3e2de] p-0" />
                    <td className="overflow-hidden border-b border-[#f0f0f0] p-0">
                      <span className={`block overflow-hidden text-left ${narrowTotals.includes(p) ? "ml-[19px]" : p >= 3706 ? "ml-[12px] bg-[#00b400] pl-[3px]" : "ml-[15px]"} ${p === 3696 ? "border-r-2 border-[#00d000]" : ""}`}>{totals[i]}</span>
                    </td>
                  </tr>
                ))}
              </tbody>
            </table>
          </div>
        </div>
        <div className="flex h-5 shrink-0 bg-white">
          <span className="flex w-16 items-center justify-center border border-[#a0a0a0]">3683</span>
          <button aria-label="Scroll down" className={`${toolBtn} w-[110px]`}><Tri size={18} /></button>
          <span className="flex flex-1 items-center justify-center">36773</span>
        </div>
      </div>
    </aside>
  );
}

function Ico({ label, children, pressed }: { label: string; children: React.ReactNode; pressed?: boolean }) {
  return (
    <button aria-label={label} title={label} className={`flex h-6 w-[23px] shrink-0 items-center justify-center ${pressed ? "border border-[#a0a0a0] bg-[#f8f8f8]" : ""}`}>
      <svg width="16" height="16" viewBox="0 0 16 16" fill="none" stroke="#000" shapeRendering="crispEdges" aria-hidden="true">
        {children}
      </svg>
    </button>
  );
}

function Sep() {
  return <span className="mx-[3px] h-[22px] w-[2px] shrink-0 border-l border-[#a0a0a0] bg-white" />;
}

function Grip() {
  return <span className="h-[26px] w-[3px] shrink-0 border-l-2 border-dotted border-[#a0a0a0]" />;
}

const sheet = <path d="M3.500 1.500h6l3 3v10h-9z" fill="#fff" />;
const stack = (
  <>
    <path d="M5.500 0.500h9v11h-9z" fill="#808000" />
    <path d="M3.500 2.500h9v11h-9z" fill="#808000" />
    <path d="M1.500 4.500h9v11h-9z" fill="#808000" />
    <path d="M3 5h6v5H3zM4 12h4v3H4z" fill="#fff" stroke="none" />
  </>
);
const ohlc = <path d="M3 6v6M6 3v8M9 6v7M12 2v8M3 9h2M6 5h2M9 11h2M12 4h2" />;

function Toolbar() {
  return (
    <div role="toolbar" aria-label="Main" className="flex h-8 shrink-0 items-center border-b-2 border-t border-b-[#808080] border-t-[#a0a0a0] bg-[#f0f0f0] pl-[6px]">
      <Grip />
      <span className="w-px" />
      <Ico label="New">{sheet}</Ico>
      <Ico label="Open">
        <path d="M1.500 14.500v-9h4l1 2h5v2" fill="#ffff80" />
        <path d="M1.500 14.500l3-5h11l-3 5z" fill="#808000" />
        <path d="M9 3c2-2 4-1 5 2M14 2v3h-3" />
      </Ico>
      <Ico label="Save all">{stack}</Ico>
      <Ico label="Copy page">
        <path d="M5.500 5.500h6l3 3v7h-9z" fill="#fff" />
        <path d="M0.500 0.500h8v5h-8z" fill="#ffffc0" />
        <path d="M1 1l3.500 3L8 1M10 2h3v3" />
      </Ico>
      <Ico label="Close workspace">
        <path d="M0.500 4.500h5l1 2h6v8h-12z" fill="#808000" />
        <path d="M10 5l5-5M12 0h3v3" stroke="#000080" />
      </Ico>
      <Sep />
      <Ico label="Print preview">
        <path d="M4.500 0.500h7l3 3v9h-10z" fill="#fff" />
        <path d="M0.500 5.500h10v9h-10z" fill="#fff" />
        <path d="M0.500 6.500h10" stroke="#00f" strokeWidth="3" />
      </Ico>
      <Ico label="Print">
        <path d="M5.500 0.500h7l-2 6h-7z" fill="#fff" />
        <path d="M1.500 7.500h13v5h-13z" fill="#c0c0c0" />
        <path d="M3.500 12.500h10v3h-10z" fill="#fff" />
        <path d="M10 10h3" stroke="#808000" strokeWidth="2" />
      </Ico>
      <Sep />
      <Ico label="Order bar">
        <path d="M2 2h12M4 5h11" stroke="#000080" strokeWidth="2" />
        <path d="M6.500 8.500h8v6h-8zM1 9h4M1 9l2-2M1 9l2 2" stroke="#000080" fill="#fff" />
      </Ico>
      <Ico label="Quote bar">
        <path d="M1 1h14v4H1z" fill="#000" />
        <path d="M3 3h2" stroke="#f00" strokeWidth="2" />
        <path d="M7 3h2M11 3h2" stroke="#0f0" strokeWidth="2" />
        <path d="M6.500 8.500h8v6h-8zM1 9h4M1 9l2-2M1 9l2 2" stroke="#000080" fill="#fff" />
      </Ico>
      <Ico label="Lock">
        <path d="M5 7V3q0-2 3-2t3 2v4" stroke="#808080" strokeWidth="2" />
        <path d="M3.500 7.500h9v8h-9z" fill="#ffff40" />
        <path d="M8 10v3" strokeWidth="2" />
      </Ico>
      <Ico label="EasyLanguage">
        <path d="M1 14L9 2l5 12z" stroke="#808080" strokeDasharray="2 1" />
        <path d="M4 12l5-9M7 12l4-9M10 14c-3-3 0-5 3-3" stroke="#008080" />
        <path d="M12 0l3 2" stroke="#000080" strokeWidth="2" />
      </Ico>
      <Ico label="TradingApps">
        <path d="M3 1h4l2 3-2 3H3L1 4z" fill="#e0e000" />
        <path d="M8 4h4l2 3-2 3H8L6 7z" fill="#f00000" />
        <path d="M4 8h4l2 3-2 4H4l-2-3z" fill="#0000d0" />
        <path d="M10 9h3l2 3-2 3h-3l-1-3z" fill="#00a000" />
      </Ico>
      <Sep />
      <div className="ml-[2px] flex h-5 w-[148px] shrink-0 items-center border border-[#d0d0d0] bg-white font-['Open_Sans',sans-serif]">
        <input aria-label="Symbol or command" placeholder="Type a symbol/command" className="min-w-0 flex-1 bg-transparent pl-[3px] text-[10px] outline-none placeholder:text-[#606060]" />
        <span className="w-3"><Tri /></span>
      </div>
      <button aria-label="Go" className="w-[17px] pl-1"><Tri dir="right" size={12} /></button>
      <Ico label="Symbol lookup">
        <path d="M5.500 0.500h10v9h-10z" fill="#fff" stroke="#808080" />
        <path d="M7 7l2-4 2 3 3-4" stroke="#00f" />
        <circle cx="5" cy="8" r="3.500" fill="#dff" />
        <path d="M8 11l5 4" strokeWidth="2" />
      </Ico>
      <span className="w-6 shrink-0" />
      <Grip />
      <Ico label="Time and sales">
        <path d="M2 3h12M2 6h12M2 9h7M2 12h7M5 1v14" stroke="#a0a0a0" strokeWidth="2" />
        <path d="M14 7h-3v3h3v4h-4" stroke="#909090" />
      </Ico>
      <Ico label="Radar">
        <path d="M4 2h11v3H4zM2 8h12M2 11h12M7 5v10M11 5v10" stroke="#a0a0a0" strokeWidth="2" />
      </Ico>
      <Ico label="Grid">
        <path d="M1.500 1.500h13v13h-13z" fill="#ffffc0" />
        <path d="M2 3h12" strokeWidth="2" />
        <path d="M3 6h4M3 8h4M3 10h4M3 12h4M9 6h4M9 8h4M9 10h4M9 12h4" />
      </Ico>
      <Sep />
      <Ico label="Strategy">
        <path d="M1.500 1v14h14" stroke="#f00" />
        <path d="M4 1v5M7 3v4M10 1v4M13 3v3" stroke="#000080" />
        <path d="M3 11c3-6 8-6 11 0M6 12l3-4 3 4" />
      </Ico>
      <Ico label="Trades">
        <path d="M5 2v10M3 9l2 3 2-3" stroke="#c00000" />
        <path d="M11 14V4M9 7l2-3 2 3" stroke="#000080" />
      </Ico>
      <span className="relative ml-[2px] flex h-5 w-[158px] shrink-0 items-center border border-[#d0d0d0] bg-white font-['Open_Sans',sans-serif]">
        <select aria-label="Analysis group" className="w-full appearance-none pl-1 text-[10px] text-[#606060] outline-none">
          <option>Insert an Analysis Group</option>
        </select>
        <span className="pointer-events-none absolute right-1"><Tri /></span>
      </span>
      <Ico label="Save group">
        <path d="M1.500 1.500h6v6h-6zM7 3h7v10H7z" fill="#fff" stroke="#000080" />
        <path d="M4 5v3M9 6h4M9 9h4M4 11l4-3 3 4 4-4" strokeWidth="2" />
      </Ico>
      <Ico label="Manage groups">
        <path d="M1 2l6 6M7 2L1 8" stroke="#00f" strokeWidth="2" />
        <path d="M8.500 2.500h6v11h-6zM4 10l4 3 4-5" strokeWidth="2" />
      </Ico>
      <Sep />
      <Ico label="Format symbol">
        <path d="M2.500 7.500h11v6h-11z" fill="#fff" />
        <path d="M4 10h7M8 5l3-3h5v5h-4z" fill="#fff" />
        <path d="M6 12h6" stroke="#00f" />
      </Ico>
      <Ico label="Format studies">
        <path d="M1.500 6.500h9v9h-9z" fill="#fff" />
        <path d="M3 9h6M3 11h6M3 13h6" />
        <path d="M5 4l3-3h7v4h-5l-2 2z" fill="#fff" />
      </Ico>
      <Sep />
      <Ico label="Session">
        <path d="M1.500 2.500h12v9h-12z" fill="#80ff80" />
        <path d="M1 3h13M3 8l3-2 3 2" stroke="#800000" strokeWidth="2" />
        <circle cx="11" cy="11" r="4" fill="#fff" />
        <path d="M11 9v2h2" />
      </Ico>
      <Ico label="Interval">
        <circle cx="6" cy="5" r="4" fill="#fff" />
        <path d="M6 3v2h2" />
        <path d="M4 10v4M8 10v5M12 7v7M15 8v4" stroke="#00c" />
      </Ico>
      <Ico label="Bar style">
        <rect x="1" y="1" width="14" height="14" fill="#000" stroke="#f00" strokeDasharray="2 1" />
        <path d="M4 6v5M7 4v6M10 7v5M13 4v5" stroke="#0f0" />
      </Ico>
      <Ico label="OHLC">
        <g stroke="#a0a0a0">{ohlc}</g>
      </Ico>
      <Ico label="Candlestick">
        <path d="M4 4v9M11 2v12M2.500 6h3v5h-3zM9.500 4h3v8h-3z" stroke="#a0a0a0" />
      </Ico>
      <Sep />
      <Ico label="Decrease spacing">
        <path d="M6 2v11M10 4v10M0 8h5M3 6l2 2-2 2M16 9h-4M13 7l-2 2 2 2" stroke="#00c" />
      </Ico>
      <Ico label="Increase spacing">
        <path d="M1 2v11M15 4v10M4 8h8M6 6L4 8l2 2M10 6l2 2-2 2" stroke="#00c" />
      </Ico>
      <Sep />
      <Ico label="Chart colors">
        <rect x="1" y="1" width="14" height="14" fill="#000" stroke="#f00" strokeDasharray="2 1" />
        <path d="M3 13l4-5 3 2 4-7" stroke="#0f0" />
        <path d="M4 3l5 3-3 5M11 9l3 3M3 7h3" stroke="#fff" strokeWidth="2" />
      </Ico>
      <button aria-label="Chart color menu" className="w-[15px]">
        <svg width="8" height="8" viewBox="0 0 8 8" aria-hidden="true"><path d="M0 2h8L4 6z" fill="#00a" /></svg>
      </button>
      <Sep />
      <Ico label="Zoom in">
        <circle cx="6" cy="6" r="5" fill="#e0ffff" shapeRendering="auto" />
        <path d="M3.500 6h5M6 3.500v5" stroke="#000080" strokeWidth="2" />
        <path d="M10 10l5 5" strokeWidth="3" />
      </Ico>
      <Ico label="Zoom out">
        <circle cx="6" cy="6" r="5" stroke="#a0a0a0" shapeRendering="auto" />
        <path d="M4 6h5M10 10l5 5" stroke="#a0a0a0" strokeWidth="2" />
      </Ico>
      <Sep />
      <Ico label="Pointer" pressed>
        <path d="M5 1v12l3-3 2 5 2-1-2-5h4z" fill="#fff" shapeRendering="auto" />
      </Ico>
      <Ico label="Data window">
        <path d="M0 0h13v11H0z" fill="#000" />
        <path d="M0 1h13" stroke="#00f" strokeWidth="3" />
        <path d="M1 8l3-2 3 2 3-3" stroke="#0f0" />
        <path d="M8 8h8M12 8v8M10 15h4" strokeWidth="2" />
      </Ico>
      <Sep />
      <Ico label="Tools">
        <path d="M4 4l10 10M12 5L3 14" strokeWidth="2" shapeRendering="auto" />
        <path d="M2 5l4-4 3 1-5 5zM10 2l4 5 1-3z" fill="#808000" shapeRendering="auto" />
      </Ico>
      <Sep />
      <Ico label="Add window">
        <path d="M7.500 1.500h8v9h-8z" fill="#ffffc0" />
        <path d="M9 4h5M9 6h5M9 8h5M3.500 8.500h8v6h-8z" fill="#fff" />
        <path d="M1 3h5M3.500 0.500v5" stroke="#00f" strokeWidth="2" />
      </Ico>
      <Sep />
      <Ico label="Note">
        <path d="M2.500 1.500h11v10h-4l-3 3v-3h-4z" fill="#fff" />
        <path d="M5 4h6M5 6h6M5 8h6" />
      </Ico>
      <span className="w-[13px] shrink-0" />
      <Grip />
      <span className="w-1 shrink-0" />
      <Ico label="Trend tool">
        <path d="M1 14L12 2M4 9l5-5M7 12l6-6M6 7l3 3" shapeRendering="auto" />
      </Ico>
      <Ico label="Vertical lines"><path d="M1.500 1v14M5.500 1v14M10.500 1v14M14.500 1v14" /></Ico>
      <Ico label="Horizontal lines"><path d="M2 3h13M2 8h13M2 13h13" /></Ico>
      <Ico label="Calculator">
        <path d="M1 1h14M3 4h12" />
        <path d="M4.500 6.500h8v9h-8z" fill="#fff" stroke="#000080" />
        <path d="M6 8h5M6 11h1M8 11h1M10 11h1M6 13h1M8 13h1M10 13h1" stroke="#00f" />
      </Ico>
      <Ico label="Speed arcs">
        <path d="M1 14C2 5 8 3 14 5M4 14c1-5 5-7 9-5M7 14c1-3 3-4 6-2M1 14L15 2" shapeRendering="auto" />
      </Ico>
      <Ico label="Fan">
        <path d="M1 14L13 1M1 14h14M1 14l14-5" strokeDasharray="3 1" shapeRendering="auto" />
      </Ico>
      <Ico label="Price extension">
        <path d="M0 15l3-4 2 3 4-12" shapeRendering="auto" />
        <path d="M9 2h6M9 5h6M9 8h6M9 11h6" />
      </Ico>
      <Ico label="Time extension">
        <path d="M0 2l5 6M5 8l3-6" shapeRendering="auto" />
        <path d="M7.500 2v13M11.500 2v13M15.500 2v13" />
      </Ico>
      <Ico label="Gann fan"><path d="M1 14L13 1M1 14h14M1 14l13-7M8 14c0-3-1-4-2-5" shapeRendering="auto" /></Ico>
      <Ico label="Extend horizontal"><path d="M1 8h14M4 5L1 8l3 3M12 5l3 3-3 3" shapeRendering="auto" /></Ico>
      <Ico label="Extend vertical"><path d="M8 1v14M5 4l3-3 3 3M5 12l3 3 3-3" shapeRendering="auto" /></Ico>
      <Ico label="Parallel lines"><path d="M1 13L8 3M5 14l7-10M9 13l6-9" shapeRendering="auto" /></Ico>
      <Ico label="Cycles"><path d="M1 14V7q0-5 6-6t8 6v7M1 10q3 5 5 1M6 11q2 4 4 0M10 11q2 3 5-1" shapeRendering="auto" /></Ico>
      <Ico label="Pencil">
        <path d="M7 10l5-9 3 2-5 9z" fill="#808000" shapeRendering="auto" />
        <path d="M1 14h6l3-2" strokeWidth="2" />
      </Ico>
      <Sep />
      <Ico label="Curve"><path d="M2 14h2c6-1 8-6 8-12" shapeRendering="auto" /></Ico>
      <Ico label="Down arrow"><path d="M7 2h2v6h3l-4 6-4-6h3z" fill="#f00" stroke="none" /></Ico>
      <Ico label="Up arrow"><path d="M7 14h2V8h3L8 2 4 8h3z" fill="#00f" stroke="none" /></Ico>
      <Ico label="Ellipse"><circle cx="8" cy="8" r="7" shapeRendering="auto" /></Ico>
      <Ico label="Rectangle"><path d="M1.500 1.500h13v13h-13z" /></Ico>
      <button aria-label="Text" className="w-[23px] text-[11px]">abc</button>
    </div>
  );
}

const tabs = ["$NG", "$NG2", "$EC Trade It!", "$Bigger Picture NG", "$5 min Energies", "$NG ORBS", "Trade Manager", "Weekly", "$Financials", "$3LB", "Untitled Workspace:  3"];

function Slant({ last }: { last?: boolean }) {
  return (
    <svg width="11" height="17" viewBox="0 0 11 17" className="mx-[6px] shrink-0" fill="none" stroke="#000" aria-hidden="true">
      {last ? <path d="M9 0L3 15H-6" /> : <path d="M2 0l6 15H18M9 0L7 5M5 9l-3 6H-8" />}
    </svg>
  );
}

function WorkspaceTabs() {
  const nav = ["M4 1v6M11 1v6L6 4z", "M9 1v6L4 4z", "M3 1v6l5-3z", "M2 1v6l5-3zM9 1v6"];
  return (
    <nav className="flex h-[18px] shrink-0 border-t border-black bg-[#f0f0f0] text-[12px]">
      {nav.map((d, i) => (
        <button key={d} aria-label={["First", "Previous", "Next", "Last"][i]} className="flex w-[17px] items-center justify-center border-b border-r border-[#808080]">
          <svg width="10" height="8" viewBox="0 0 12 8" fill="#808080" stroke="#808080" aria-hidden="true">
            <path d={d} />
          </svg>
        </button>
      ))}
      <div className="-ml-2 flex">
        <Slant />
        {tabs.map((t, i) => (
          <React.Fragment key={t}>
            <button className={`whitespace-pre leading-[17px] ${t === "$NG2" ? "bg-white font-bold" : ""}`}>{t}</button>
            <Slant last={i === tabs.length - 1} />
          </React.Fragment>
        ))}
      </div>
    </nav>
  );
}

export default function App() {
  return (
    <div className="relative flex h-screen w-full flex-col overflow-hidden bg-[#f0f0f0] font-['Liberation_Sans',Arial,sans-serif] text-black">
      <header className="flex h-[22px] shrink-0 items-center border-t-2 border-[#333] bg-gradient-to-b from-[#99b4d1] to-[#bcd0e6] pl-[5px] pr-[2px] font-['Open_Sans',sans-serif]">
        <svg width="12" height="17" viewBox="0 0 12 17" className="mr-[9px]" aria-hidden="true">
          <path d="M4 16C-1 8 0 1 6 1s7 8 3 11c2-5 1-8-2-8s-4 4-3 12z" fill="#0068d0" />
        </svg>
        <h1 className="flex-1 text-[11px]">TradeStation 9.0 - $Trade it! - $NG2</h1>
        <div className="flex gap-[3px]">
          <GlassButton label="Minimize"><MinGlyph /></GlassButton>
          <GlassButton label="Restore"><MaxGlyph restore /></GlassButton>
          <GlassButton label="Close" close><CloseGlyph /></GlassButton>
        </div>
      </header>
      <nav className="flex h-5 shrink-0 items-center gap-[15px] bg-gradient-to-b from-white via-[#e6eaf6] to-[#dbe1f2] pl-[7px] font-['Open_Sans',sans-serif] text-[11px]">
        {["File", "Edit", "View", "Insert", "Format", "Drawing", "Window", "Help"].map((m) => (
          <button key={m}>{m}</button>
        ))}
      </nav>
      <Toolbar />
      <main className="grid min-h-0 flex-1 grid-cols-[249fr_561fr_566fr_117fr_427fr] grid-rows-[minmax(0,552fr)_minmax(0,556fr)]">
        <ChartWindow
          title="@NG Daily"
          pad="pl-[10px] pr-[9px] pb-[9px]"
          viewBox="11 82 229 535"
          header={quote("@NG - Daily", [{ text: "-0.055", color: "text-[#ff0000]", clip: "w-[28px] overflow-hidden" }, { text: "...", color: "text-[#ff0000]" }])}
        >
          <DailyChart />
        </ChartWindow>
        <ChartWindow title="@NG 10 minute" pad="px-2 pb-[9px]" viewBox="258 82 544 535" header={quote("@NG - 10 min", [...fullTail, { text: "V=38", color: "text-white", clip: "w-4 overflow-hidden" }, { text: "...", color: "text-white" }])}>
          <TenMinChart />
        </ChartWindow>
        <ChartWindow title="@NG 55 tick" pad="px-2 pb-[9px]" viewBox="819 82 549 535" header={quote("@NG - 55 Tick Bar", [...fullTail, { text: "...", color: "text-white" }])}>
          <TickChart />
        </ChartWindow>
        <TimeAndSales trades={topTrades} />
        <div className="row-span-2 flex min-h-0 min-w-0 flex-col [&>section]:flex-1">
          <Matrix />
        </div>
        <ChartWindow
          title="@NG 30 minute"
          pad="pl-[10px] pr-[9px] pt-[2px] pb-[11px]"
          viewBox="11 636 229 535"
          header={quote("@NG - 30 min", [{ text: "-0.0", color: "text-[#ff0000]" }, { text: "...", color: "text-[#ff0000]" }])}
        >
          <ThirtyMinChart />
        </ChartWindow>
        <ChartWindow title="@NG 5 minute" pad="pl-2 pr-[7px] pt-[2px] pb-[11px]" viewBox="258 636 545 535" header={quote("@NG - 5 min", [...fullTail, { text: "V=", color: "text-white", clip: "w-[9px] overflow-hidden" }, { text: "...", color: "text-white" }])}>
          <FiveMinChart />
        </ChartWindow>
        <ChartWindow
          active
          title="@NG 3 line break"
          pad="pl-2 pr-1 pt-px pb-[11px]"
          viewBox="819 635 553 518"
          header={quote("@NG - 3 LB, 1 tick", [...fullTail, { text: "V=", color: "text-white", clip: "w-1 overflow-hidden" }, { text: "...", color: "text-white" }])}
          footer={
            <div className="flex h-[18px] shrink-0 items-center bg-[#ececec] px-1">
              <button aria-label="Scroll left"><Tri dir="left" /></button>
              <span className="flex-1" />
              <button aria-label="Scroll thumb" className="mr-[6px] h-[15px] w-[15px] border border-[#909090] bg-gradient-to-b from-white to-[#d0d0d0]" />
              <button aria-label="Scroll right"><Tri dir="right" /></button>
            </div>
          }
        >
          <LineBreakChart />
        </ChartWindow>
        <TimeAndSales trades={bottomTrades} shaded />
      </main>
      <WorkspaceTabs />
      <DomWindow />
    </div>
  );
}
